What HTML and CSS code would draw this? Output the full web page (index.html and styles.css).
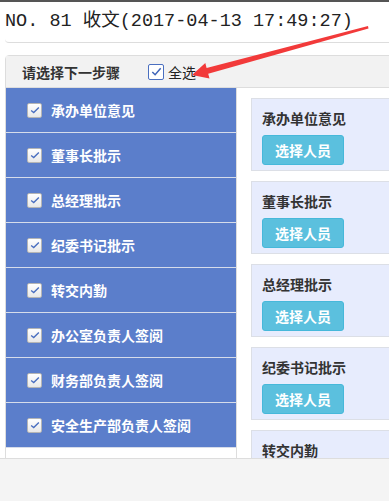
FILE: index.html
```html
<!DOCTYPE html>
<html>
<head>
<meta charset="utf-8">
<title>收文</title>
<link rel="stylesheet" href="styles.css">
</head>
<body>
<div class="page">
<div class="doc-head">NO. 81 收文(2017-04-13 17:49:27)</div>
<div class="step-panel">
<div class="step-head">
<span class="step-title">请选择下一步骤</span>
<label class="check-all"><span class="box box-all"><svg viewBox="0 0 14 14" width="13" height="13"><path d="M2.5 7.5 L5.5 10.5 L11.5 3.5" fill="none" stroke="#3e64b8" stroke-width="1.6"/></svg></span>全选</label>
</div>
<div class="step-body">
<ul class="step-list">
<li><span class="box"><svg viewBox="0 0 14 14" width="12" height="12"><path d="M2.5 7.5 L5.5 10 L11.5 4" fill="none" stroke="#4a6fc0" stroke-width="1.6"/></svg></span>承办单位意见</li>
<li><span class="box"><svg viewBox="0 0 14 14" width="12" height="12"><path d="M2.5 7.5 L5.5 10 L11.5 4" fill="none" stroke="#4a6fc0" stroke-width="1.6"/></svg></span>董事长批示</li>
<li><span class="box"><svg viewBox="0 0 14 14" width="12" height="12"><path d="M2.5 7.5 L5.5 10 L11.5 4" fill="none" stroke="#4a6fc0" stroke-width="1.6"/></svg></span>总经理批示</li>
<li><span class="box"><svg viewBox="0 0 14 14" width="12" height="12"><path d="M2.5 7.5 L5.5 10 L11.5 4" fill="none" stroke="#4a6fc0" stroke-width="1.6"/></svg></span>纪委书记批示</li>
<li><span class="box"><svg viewBox="0 0 14 14" width="12" height="12"><path d="M2.5 7.5 L5.5 10 L11.5 4" fill="none" stroke="#4a6fc0" stroke-width="1.6"/></svg></span>转交内勤</li>
<li><span class="box"><svg viewBox="0 0 14 14" width="12" height="12"><path d="M2.5 7.5 L5.5 10 L11.5 4" fill="none" stroke="#4a6fc0" stroke-width="1.6"/></svg></span>办公室负责人签阅</li>
<li><span class="box"><svg viewBox="0 0 14 14" width="12" height="12"><path d="M2.5 7.5 L5.5 10 L11.5 4" fill="none" stroke="#4a6fc0" stroke-width="1.6"/></svg></span>财务部负责人签阅</li>
<li><span class="box"><svg viewBox="0 0 14 14" width="12" height="12"><path d="M2.5 7.5 L5.5 10 L11.5 4" fill="none" stroke="#4a6fc0" stroke-width="1.6"/></svg></span>安全生产部负责人签阅</li>
</ul>
<div class="step-cards">
<div class="card"><div class="card-title">承办单位意见</div><button class="pick-btn">选择人员</button></div>
<div class="card"><div class="card-title">董事长批示</div><button class="pick-btn">选择人员</button></div>
<div class="card"><div class="card-title">总经理批示</div><button class="pick-btn">选择人员</button></div>
<div class="card"><div class="card-title">纪委书记批示</div><button class="pick-btn">选择人员</button></div>
<div class="card"><div class="card-title">转交内勤</div><button class="pick-btn">选择人员</button></div>
</div>
</div>
</div>
<!-- annotation arrow -->
<svg class="arrow" width="389" height="100" viewBox="0 0 389 100">
<polygon points="192,75 205.3,63.1 206.6,67.9 368,26 368.5,28.5 208.2,73.7 209.5,78.5" fill="#f23a3a"/>
</svg>
</div>
</body>
</html>
```
FILE: styles.css
```css
html, body {
    margin: 0;
    overflow: hidden;
}
body {
    background-color: #f4f4f4;
    font-family: "Noto Sans CJK SC", sans-serif;
}
.page {
    position: relative;
    height: 456px;
    background-color: #fff;
    border-top: 2px solid #555;
    border-bottom: 1px solid #ddd;
    padding-left: 5px;
    overflow: hidden;
}
.doc-head {
    width: 560px;
    height: 40px;
    line-height: 40px;
    font-family: "Liberation Mono", "Noto Sans CJK SC", monospace;
    font-size: 18.5px;
    color: #222;
    border-bottom: 1px solid #ddd;
    border-radius: 0 0 4px 4px;
    margin-bottom: 12px;
}
.step-panel {
    width: 560px;
    border: 1px solid #ddd;
    border-radius: 4px 4px 0 0;
}
.step-head {
    display: flex;
    align-items: center;
    height: 31px;
    padding-left: 16px;
    background-color: #f2f2f2;
    border-bottom: 1px solid #ddd;
}
.step-title {
    font-size: 14px;
    font-weight: bold;
    color: #333;
}
.check-all {
    display: flex;
    align-items: center;
    margin-left: 28px;
    font-size: 14px;
    color: #222;
}
.box {
    display: inline-flex;
    align-items: center;
    justify-content: center;
    width: 13px;
    height: 13px;
    background: linear-gradient(#fff, #e8e8e8);
    border: 1px solid #b5b5b5;
    border-radius: 2px;
}
.box-all {
    width: 14px;
    height: 14px;
    background: #fff;
    border-color: #4a6fc0;
    margin-right: 4px;
}
.step-body {
    display: flex;
}
.step-list {
    list-style: none;
    margin: 0;
    padding: 0 0 10px;
    width: 230px;
    border-right: 1px solid #ddd;
}
.step-list li {
    display: flex;
    align-items: center;
    height: 44px;
    padding-left: 21px;
    background-color: #5b7ecb;
    border-bottom: 1px solid #d6dcea;
    color: #fff;
    font-size: 14px;
    font-weight: bold;
}
.step-list li .box {
    margin-right: 9px;
}
.step-cards {
    flex: 1;
    display: flex;
    flex-direction: column;
    gap: 10px;
    padding: 10px 0 0 14px;
}
.card {
    height: 62px;
    padding: 9px 0 0 10px;
    background-color: #e7ecfd;
    border: 1px solid #dcdfe6;
}
.card-title {
    font-size: 14px;
    font-weight: bold;
    line-height: 20px;
    color: #333;
    margin-bottom: 7px;
}
.pick-btn {
    width: 82px;
    height: 30px;
    background-color: #5bc0de;
    border: 1px solid #46b8da;
    border-radius: 3px;
    color: #fff;
    font-family: "Noto Sans CJK SC", sans-serif;
    font-size: 14px;
    font-weight: bold;
    padding: 0;
}
.arrow {
    position: absolute;
    left: 0;
    top: -2px;
}
```
